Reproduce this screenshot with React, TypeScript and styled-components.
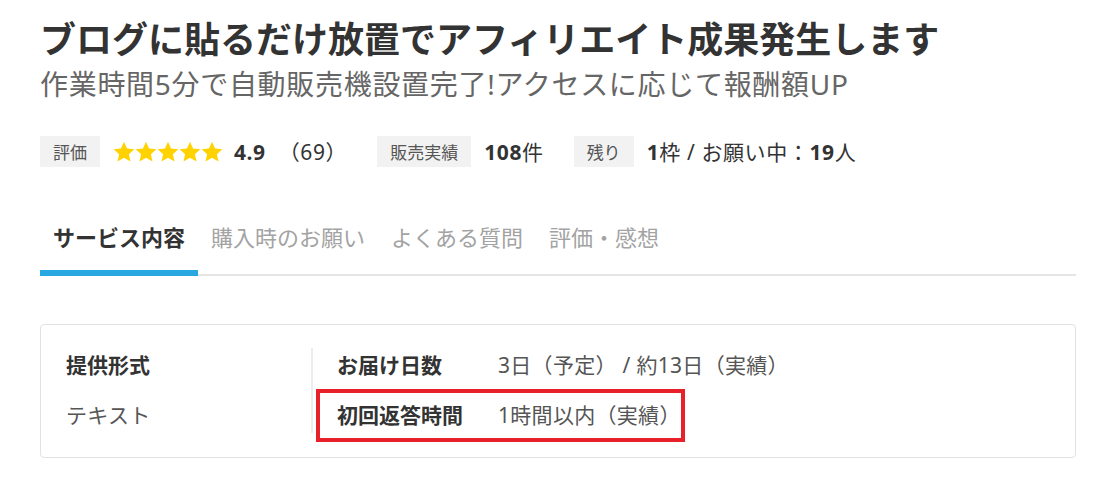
import React from 'react'
import styled, { createGlobalStyle } from 'styled-components'

const GlobalStyle = createGlobalStyle`
  html, body {
    margin     : 0;
    padding    : 0;
    background : #fff;
  }
  body {
    font-family : "Noto Sans", "Noto Sans CJK JP", sans-serif;
    color       : #333;
  }
`

const Page = styled.div`
  width   : 1036px;
  padding : 18px 22px 19px 40px;
`

const Title = styled.h1`
  margin      : 0;
  font-size   : 36px;
  line-height : 44px;
  font-weight : 700;
  color       : #333;
`

const Subtitle = styled.p`
  margin         : 4px 0 0;
  font-size      : 28px;
  line-height    : 36px;
  letter-spacing : 0.7px;
  color          : #666;
`

const StatsRow = styled.div`
  display     : flex;
  align-items : center;
  gap         : 30px;
  margin-top  : 34px;
`

const Stat = styled.div`
  display     : flex;
  align-items : center;
  gap         : 13px;
`

const Tag = styled.span`
  display     : inline-flex;
  align-items : center;
  height      : 31px;
  padding     : 0 13px;
  background  : #f2f2f2;
  color       : #555;
  font-size   : 17px;
`

const Stars = styled.span`
  display      : inline-flex;
  margin-right : -2px;
`

const Value = styled.span<{ $strong?: boolean }>`
  font-size      : 21px;
  line-height    : 28px;
  color          : #333;
  font-weight    : ${p => (p.$strong ? 700 : 400)};
  letter-spacing : 0.6px;

  b {
    font-weight : 700;
  }
`

const TabList = styled.nav`
  display       : flex;
  margin-top    : 55px;
  border-bottom : 2px solid #e5e5e5;
`

const Tab = styled.a<{ $active?: boolean }>`
  padding       : 0 13px 18px;
  margin-bottom : -2px;
  font-size     : 22px;
  line-height   : 30px;
  font-weight   : ${p => (p.$active ? 700 : 400)};
  color         : ${p => (p.$active ? '#333' : '#a3a3a3')};
  border-bottom : 6px solid ${p => (p.$active ? '#29a7e1' : 'transparent')};
  cursor        : pointer;
`

const Card = styled.section`
  display       : grid;
  grid-template-columns : 245px 2px 1fr;
  margin-top    : 48px;
  padding       : 23px 24px 24px 25px;
  border        : 1px solid #e2e2e2;
  border-radius : 4px;
`

const Column = styled.div`
  display        : flex;
  flex-direction : column;
  align-items    : flex-start;
  gap            : 20px;
  padding        : 2px 0 3px;
`

const Divider = styled.div`
  background : #ececec;
`

const DetailColumn = styled(Column)`
  padding-left : 24px;
`

const Label = styled.span`
  font-size   : 21px;
  line-height : 30px;
  font-weight : 700;
  color       : #333;
`

const Text = styled.span`
  font-size      : 21px;
  line-height    : 30px;
  letter-spacing : 0.3px;
  color          : #555;
`

const DetailRow = styled.div`
  display : flex;
`

const DetailLabel = styled(Label)`
  width : 161px;
`

const Highlight = styled.div`
  display : inline-flex;
  border  : 4px solid #e8202a;
  padding : 7px 0 8px 17px;
  margin  : -11px 0 -12px -21px;
`

const Star = () => (
  <svg width="22" height="22" viewBox="0 0 24 24">
    <path
      fill="#ffd200"
      d="M12 0.8l3.3 7.4 8 .8-6 5.4 1.8 7.9L12 18.2l-7.1 4.1 1.8-7.9-6-5.4 8-.8z"
    />
  </svg>
)

export default function App() {
  return (
    <>
      <GlobalStyle />
      <Page>
        <Title>ブログに貼るだけ放置でアフィリエイト成果発生します</Title>
        <Subtitle>作業時間5分で自動販売機設置完了!アクセスに応じて報酬額UP</Subtitle>

        <StatsRow>
          <Stat>
            <Tag>評価</Tag>
            <Stars>
              {[0, 1, 2, 3, 4].map(i => <Star key={i} />)}
            </Stars>
            <Value $strong>4.9</Value>
            <Value>（69）</Value>
          </Stat>
          <Stat>
            <Tag>販売実績</Tag>
            <Value><b>108</b>件</Value>
          </Stat>
          <Stat>
            <Tag>残り</Tag>
            <Value><b>1</b>枠 / お願い中：<b>19</b>人</Value>
          </Stat>
        </StatsRow>

        <TabList>
          <Tab $active>サービス内容</Tab>
          <Tab>購入時のお願い</Tab>
          <Tab>よくある質問</Tab>
          <Tab>評価・感想</Tab>
        </TabList>

        <Card>
          <Column>
            <Label>提供形式</Label>
            <Text>テキスト</Text>
          </Column>
          <Divider />
          <DetailColumn>
            <DetailRow>
              <DetailLabel>お届け日数</DetailLabel>
              <Text>3日（予定） / 約13日（実績）</Text>
            </DetailRow>
            <Highlight>
              <DetailRow>
                <DetailLabel>初回返答時間</DetailLabel>
                <Text>1時間以内（実績）</Text>
              </DetailRow>
            </Highlight>
          </DetailColumn>
        </Card>
      </Page>
    </>
  )
}
